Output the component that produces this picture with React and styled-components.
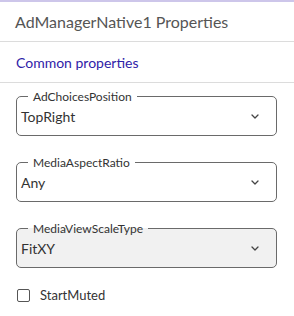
import React from "react";
import styled, { createGlobalStyle } from "styled-components";

const Global = createGlobalStyle`
  body {
    margin: 0;
    background: #fff;
    font-family: "Lato", "Open Sans", sans-serif;
  }
`;

const Chevron = () => (
  <svg width="8" height="5" viewBox="0 0 8 5" fill="none">
    <path d="M1 1l3 3 3-3" stroke="#444" strokeWidth="1.3" strokeLinecap="round" strokeLinejoin="round" />
  </svg>
);

const fields = [
  { label: "AdChoicesPosition", value: "TopRight" },
  { label: "MediaAspectRatio", value: "Any" },
  { label: "MediaViewScaleType", value: "FitXY", active: true },
];

const App = () => {
  return (
    <Panel>
      <Global />
      <Header>AdManagerNative1 Properties</Header>
      <Section>Common properties</Section>
      <Body>
        {fields.map((f) => (
          <Field key={f.label} $active={f.active}>
            <Legend>{f.label}</Legend>
            <Value>{f.value}</Value>
            <Chevron />
          </Field>
        ))}
        <Check>
          <Box />
          <span>StartMuted</span>
        </Check>
      </Body>
    </Panel>
  );
};

const Panel = styled.div`
  width: 294px;
  height: 316px;
  border-top: 2px solid #cdc6ea;
  box-sizing: border-box;
  overflow: hidden;
`;

const Header = styled.div`
  height: 39px;
  padding-left: 15px;
  display: flex;
  align-items: center;
  font-size: 16px;
  color: #555;
  border-bottom: 1px solid #dcdcdc;
`;

const Section = styled.div`
  height: 40px;
  padding-left: 16px;
  display: flex;
  align-items: center;
  font-size: 14px;
  color: #2f22a8;
  border-bottom: 1px solid #dcdcdc;
`;

const Body = styled.div`
  padding: 6px 17px 0 16px;
  display: flex;
  flex-direction: column;
  gap: 19px;
`;

const Field = styled.fieldset`
  margin: 0;
  height: 47px;
  box-sizing: border-box;
  padding: 4px 17px 0 4px;
  border: 1px solid #6a6a6a;
  border-radius: 5px;
  background: ${(p) => (p.$active ? "#f1f1f1" : "#fff")};
  display: flex;
  align-items: center;
  justify-content: space-between;
`;

const Legend = styled.legend`
  margin-left: 7px;
  padding: 0 5px;
  font-size: 12px;
  color: #333;
`;

const Value = styled.span`
  font-size: 14px;
  color: #333;
`;

const Check = styled.label`
  display: flex;
  align-items: center;
  gap: 10px;
  padding-left: 1px;
  font-size: 13px;
  color: #333;
`;

const Box = styled.span`
  width: 11px;
  height: 11px;
  border: 1px solid #555;
  border-radius: 2px;
`;

export default App;
